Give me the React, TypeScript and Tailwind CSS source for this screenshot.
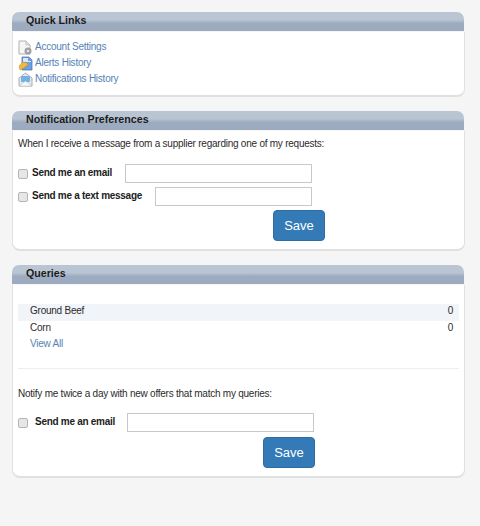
import React from "react";

function Panel({
  title,
  bodyClass,
  children,
}: {
  title: string;
  bodyClass: string;
  children: React.ReactNode;
}) {
  return (
    <section className="w-[452px]">
      <h2 className="h-[19px] pl-[14px] rounded-t-[7px] bg-gradient-to-b from-[#bac5d4] from-40% to-[#9cabbf] to-60% text-[10.67px] leading-[17px] font-bold tracking-normal text-[#1c1c1c]">
        {title}
      </h2>
      <div
        className={`bg-white border-x border-b-2 border-[#e0e0e0] mt-px -mr-px rounded-b-[8px] ${bodyClass}`}
      >
        {children}
      </div>
    </section>
  );
}

function Check({ label, labelClass, inputClass }: { label: string; labelClass: string; inputClass: string }) {
  return (
    <div className="flex items-center h-[19px]">
      <span className="w-[10px] h-[10px] rounded-[2px] border border-[#b5b5b5] bg-[#e6e6e6] shrink-0" />
      <span className={`font-bold text-[#1c1c1c] tracking-[-0.28px] pb-[2px] ${labelClass}`}>{label}</span>
      <span className={`h-[19px] border border-[#c8c8c8] bg-white ${inputClass}`} />
    </div>
  );
}

function SaveButton({ className }: { className: string }) {
  return (
    <button className={`w-[52px] h-[31px] rounded-[4px] bg-[#337ab7] border border-[#2e6da4] text-white text-[13px] tracking-normal ${className}`}>
      Save
    </button>
  );
}

function SettingsIcon() {
  return (
    <svg width="15" height="15" viewBox="0 0 15 15">
      <path d="M1 1h7l4 4v9H1z" fill="#f6f6f6" stroke="#b0b0b0" />
      <path d="M8 1v4h4" fill="#e2e2e2" stroke="#b0b0b0" strokeWidth="0.6" />
      <circle cx="10" cy="11" r="3.5" fill="#a0a0a0" />
      <circle cx="10" cy="11" r="1.3" fill="#e4e4e4" />
    </svg>
  );
}

function AlertsIcon() {
  return (
    <svg width="15" height="15" viewBox="0 0 15 15">
      <path d="M4 1h7l3 3v10H4z" fill="#6f9fdf" stroke="#3f6fb8" strokeWidth="0.7" />
      <path d="M5 2h5v3h3v1H5z" fill="#dbe8f8" />
      <path d="M1 10l4-4 4 1 1 2-6 4-2 1z" fill="#eeb93c" stroke="#c08d20" strokeWidth="0.5" />
    </svg>
  );
}

function NotifyIcon() {
  return (
    <svg width="15" height="15" viewBox="0 0 15 15">
      <path d="M1 6l6.5-5L14 6v8H1z" fill="#e8e8e8" stroke="#9a9a9a" strokeWidth="0.8" />
      <rect x="3" y="4" width="9" height="6" rx="1" fill="#6fb2e6" />
      <path d="M1 14l6.5-5 6.5 5z" fill="#f7f7f7" stroke="#b5b5b5" strokeWidth="0.5" />
    </svg>
  );
}

export default function App() {
  const links = [
    { label: "Account Settings", icon: <SettingsIcon /> },
    { label: "Alerts History", icon: <AlertsIcon /> },
    { label: "Notifications History", icon: <NotifyIcon /> },
  ];

  return (
    <div className="min-h-[526px] bg-[#f5f5f5] pt-3 pl-3 flex flex-col gap-[14px] font-['Liberation_Sans',Arial,sans-serif] text-[10px] tracking-[-0.24px] text-[#2b2b2b]">
      <Panel title="Quick Links" bodyClass="h-[65px] pt-[7px] pl-[5px]">
        {links.map((l) => (
          <div key={l.label} className="flex items-center h-4 gap-[2px]">
            {l.icon}
            <a className="text-[#5582b5] pb-[2px]">{l.label}</a>
          </div>
        ))}
      </Panel>

      <Panel title="Notification Preferences" bodyClass="h-[120px] pt-[6px] pl-[5px]">
        <p className="leading-[13px] mb-[14px]">
          When I receive a message from a supplier regarding one of my requests:
        </p>
        <div className="flex flex-col gap-1">
          <Check label="Send me an email" labelClass="ml-[4px] w-[93px]" inputClass="w-[187px]" />
          <Check label="Send me a text message" labelClass="ml-[4px] w-[123px]" inputClass="w-[157px]" />
        </div>
        <SaveButton className="block ml-[255px] mt-[4px]" />
      </Panel>

      <Panel title="Queries" bodyClass="h-[193px] pt-[19px] px-[5px]">
        <div className="flex justify-between h-[17px] pl-[12px] pr-[6px] bg-[#f1f4f8] leading-[13px]">
          <span>Ground Beef</span>
          <span>0</span>
        </div>
        <div className="flex justify-between h-[16px] pl-[12px] pr-[6px] leading-[13px]">
          <span>Corn</span>
          <span>0</span>
        </div>
        <a className="block h-4 pl-[12px] leading-[13px] text-[#5582b5]">View All</a>
        <hr className="mt-[15px] mb-[18px] border-t border-[#eeeeee]" />
        <p className="leading-[13px] mb-[13px]">Notify me twice a day with new offers that match my queries:</p>
        <Check label="Send me an email" labelClass="ml-[7px] w-[92px]" inputClass="w-[187px]" />
        <SaveButton className="block ml-[245px] mt-[5px]" />
      </Panel>
    </div>
  );
}
